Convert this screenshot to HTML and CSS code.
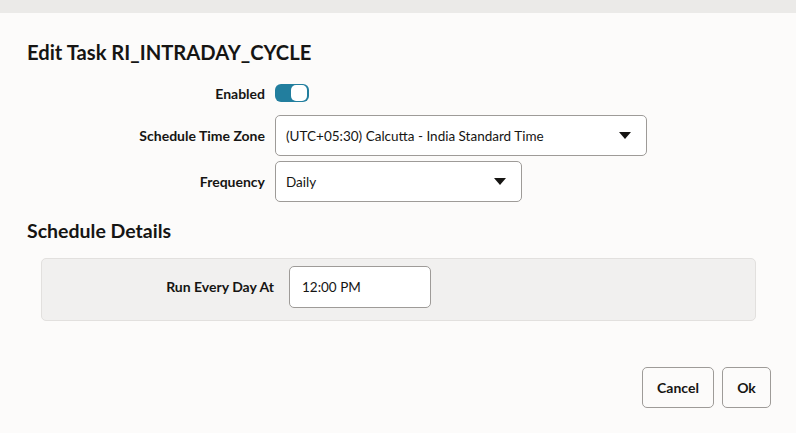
FILE: index.html
```html
<!DOCTYPE html>
<html lang="en">
<head>
<meta charset="utf-8">
<link rel="stylesheet" href="styles.css">
</head>
<body>
<div class="topband"></div>
<div class="dialog">
  <h1 class="title">Edit Task RI_INTRADAY_CYCLE</h1>
  <div class="form">
    <div class="row row-toggle">
      <label class="label">Enabled</label>
      <div class="toggle"><span class="knob"></span></div>
    </div>
    <div class="row">
      <label class="label">Schedule Time Zone</label>
      <div class="select select-tz">
        <span>(UTC+05:30) Calcutta - India Standard Time</span>
        <svg class="caret" width="12" height="7" viewBox="0 0 12 7"><path d="M0 0H12L6 7Z" fill="#161513"/></svg>
      </div>
    </div>
    <div class="row">
      <label class="label">Frequency</label>
      <div class="select select-freq">
        <span>Daily</span>
        <svg class="caret" width="12" height="7" viewBox="0 0 12 7"><path d="M0 0H12L6 7Z" fill="#161513"/></svg>
      </div>
    </div>
  </div>
  <h2 class="subtitle">Schedule Details</h2>
  <div class="panel">
    <label class="label panel-label">Run Every Day At</label>
    <div class="input">12:00 PM</div>
  </div>
  <div class="actions">
    <button class="btn btn-cancel">Cancel</button>
    <button class="btn btn-ok">Ok</button>
  </div>
</div>
</body>
</html>
```
FILE: styles.css
```css
html, body {
  margin: 0;
  padding: 0;
}
body {
  background: #fcfbfa;
  font-family: "Lato", "Noto Sans", sans-serif;
  color: #161513;
  width: 796px;
  height: 433px;
  overflow: hidden;
}
.topband {
  height: 13px;
  background: #ebeae8;
}
.dialog {
  padding: 0 25px 0 27px;
}
.title {
  margin: 27px 0 0 0;
  font-size: 20.2px;
  line-height: 24px;
  font-weight: 700;
}
.form {
  margin-top: 20px;
  display: flex;
  flex-direction: column;
  gap: 5px;
}
.row {
  display: flex;
  align-items: center;
  gap: 10px;
}
.row-toggle {
  height: 18px;
  margin-bottom: 8px;
}
.label {
  width: 238px;
  text-align: right;
  font-size: 14px;
  font-weight: 700;
  color: #161513;
}
.toggle {
  width: 34px;
  height: 18px;
  box-sizing: border-box;
  border-radius: 6px;
  background: #227e9e;
  display: flex;
  justify-content: flex-end;
  align-items: center;
  padding: 1px 2px 1px 1px;
}
.knob {
  width: 16px;
  height: 16px;
  border-radius: 5px;
  background: #ffffff;
}
.select {
  height: 41px;
  box-sizing: border-box;
  border: 1px solid #9e9b98;
  border-radius: 5px;
  background: #ffffff;
  display: flex;
  align-items: center;
  justify-content: space-between;
  padding: 0 15px 0 10px;
  font-size: 13.5px;
}
.select-tz {
  width: 372px;
}
.select-freq {
  width: 247px;
}
.subtitle {
  margin: 17px 0 0 0;
  font-size: 19.5px;
  line-height: 24px;
  font-weight: 700;
}
.panel {
  margin: 15px 15px 0 14px;
  height: 63px;
  box-sizing: border-box;
  background: #f1f0ef;
  border: 1px solid #e2e0de;
  border-radius: 5px;
  display: flex;
  align-items: flex-start;
  padding-top: 7px;
  gap: 15px;
}
.panel-label {
  width: 232px;
  line-height: 42px;
}
.input {
  width: 142px;
  height: 42px;
  box-sizing: border-box;
  border: 1px solid #9e9b98;
  border-radius: 5px;
  background: #ffffff;
  display: flex;
  align-items: center;
  padding-left: 12px;
  font-size: 13.5px;
}
.actions {
  margin-top: 46px;
  display: flex;
  justify-content: flex-end;
  gap: 8px;
}
.btn {
  height: 41px;
  box-sizing: border-box;
  border: 1px solid #9e9b98;
  border-radius: 5px;
  background: #fcfbfa;
  font-family: "Lato", "Noto Sans", sans-serif;
  font-size: 14px;
  font-weight: 700;
  color: #161513;
  padding: 0;
}
.btn-cancel {
  width: 72px;
}
.btn-ok {
  width: 49px;
}
```
